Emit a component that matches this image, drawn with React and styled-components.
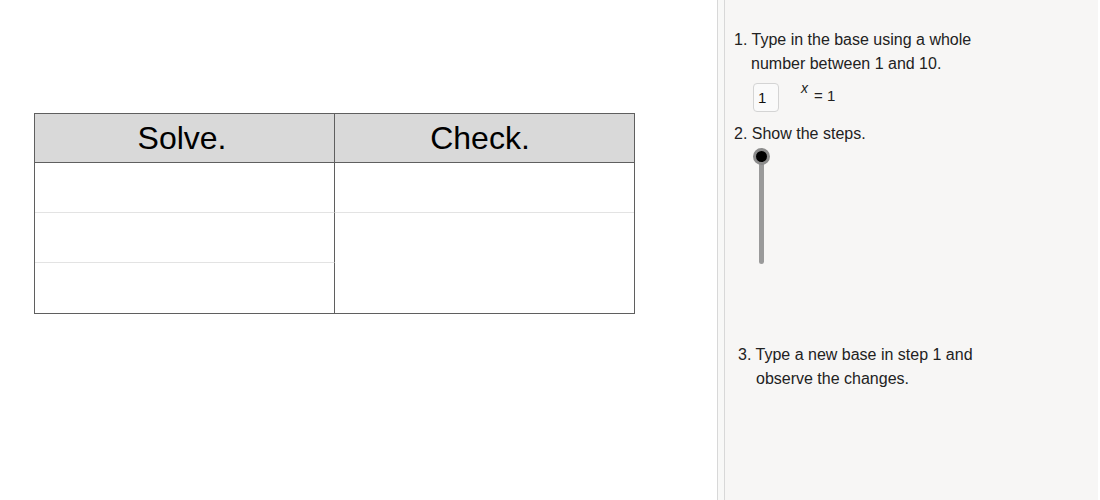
import styled, { createGlobalStyle } from "styled-components";

const GlobalStyle = createGlobalStyle`
  html, body {
    margin: 0;
    padding: 0;
    background: #ffffff;
    font-family: "Liberation Sans", Arial, sans-serif;
  }
`;

const Page = styled.div`
  display: flex;
  width: 1100px;
  height: 500px;
  overflow: hidden;
`;

const Canvas = styled.div`
  width: 717px;
  flex: none;
  padding: 113px 0 0 34px;
  box-sizing: border-box;
  background: #ffffff;
`;

const Table = styled.div`
  display: grid;
  grid-template-columns: 300px 299px;
  grid-template-rows: 49px 50px 50px 50px;
  width: 601px;
  border: 1px solid #5f5f5f;
  box-sizing: border-box;
`;

const HeadCell = styled.div`
  background: #d9d9d9;
  border-bottom: 1px solid #5f5f5f;
  border-right: ${({ last }) => (last ? "none" : "1px solid #5f5f5f")};
  display: flex;
  align-items: center;
  justify-content: center;
  padding-right: ${({ last }) => (last ? 9 : 5)}px;
  font-size: 32px;
  color: #000;
`;

const Cell = styled.div`
  border-right: ${({ last }) => (last ? "none" : "1px solid #5f5f5f")};
  border-bottom: ${({ bottom }) => (bottom ? "none" : "1px solid #e3e3e3")};
  grid-row: ${({ span }) => (span ? `span ${span}` : "auto")};
`;

const Sidebar = styled.div`
  flex: 1;
  display: flex;
  border-left: 1px solid #d8d8d8;
  background: #f7f6f5;
  margin-right: 2px;
`;

const Strip = styled.div`
  width: 6px;
  flex: none;
  background: #f8f8f7;
  border-right: 1px solid #d8d8d8;
`;

const Panel = styled.div`
  flex: 1;
  padding: 28px 0 0 9px;
  font-size: 16px;
  line-height: 24px;
  color: #222;
`;

const Step = styled.div`
  padding-left: ${({ indent }) => indent || 0}px;
`;

const Hang = styled.div`
  padding-left: ${({ indent }) => indent || 17}px;
`;

const InputRow = styled.div`
  display: flex;
  align-items: flex-start;
  margin: 7px 0 10px 19px;
  height: 29px;
`;

const NumBox = styled.div`
  width: 26px;
  height: 29px;
  border: 1px solid #d4d4d4;
  border-radius: 4px;
  background: #fafafa;
  box-sizing: border-box;
  font-size: 15px;
  line-height: 28px;
  padding-left: 4px;
  color: #111;
`;

const Formula = styled.div`
  position: relative;
  margin-left: 21px;
  width: 40px;
  height: 29px;
`;

const Sup = styled.span`
  position: absolute;
  left: 1px;
  top: -3px;
  font-style: italic;
  font-size: 14px;
  line-height: 16px;
`;

const Eq = styled.span`
  position: absolute;
  left: 14px;
  top: 3px;
  font-size: 15px;
  line-height: 20px;
`;

const SliderWrap = styled.div`
  position: relative;
  height: 197px;
  margin-left: 19px;
`;

const Track = styled.div`
  position: absolute;
  left: 6px;
  top: 12px;
  width: 5px;
  height: 106px;
  border-radius: 3px;
  background: #9a9a9a;
`;

const Knob = styled.div`
  position: absolute;
  left: 0;
  top: 2px;
  width: 17px;
  height: 17px;
  border-radius: 50%;
  background: #000;
  border: 3px solid #8c8c8c;
  box-sizing: border-box;
`;

export default function App() {
  return (
    <Page>
      <GlobalStyle />
      <Canvas>
        <Table>
          <HeadCell>Solve.</HeadCell>
          <HeadCell last>Check.</HeadCell>
          <Cell />
          <Cell last />
          <Cell />
          <Cell last bottom span={2} />
          <Cell bottom />
        </Table>
      </Canvas>
      <Sidebar>
        <Strip />
        <Panel>
          <Step>1. Type in the base using a whole</Step>
          <Hang>number between 1 and 10.</Hang>
          <InputRow>
            <NumBox>1</NumBox>
            <Formula>
              <Sup>x</Sup>
              <Eq>= 1</Eq>
            </Formula>
          </InputRow>
          <Step>2. Show the steps.</Step>
          <SliderWrap>
            <Track />
            <Knob />
          </SliderWrap>
          <Step indent={4}>3. Type a new base in step 1 and</Step>
          <Hang indent={22}>observe the changes.</Hang>
        </Panel>
      </Sidebar>
    </Page>
  );
}
